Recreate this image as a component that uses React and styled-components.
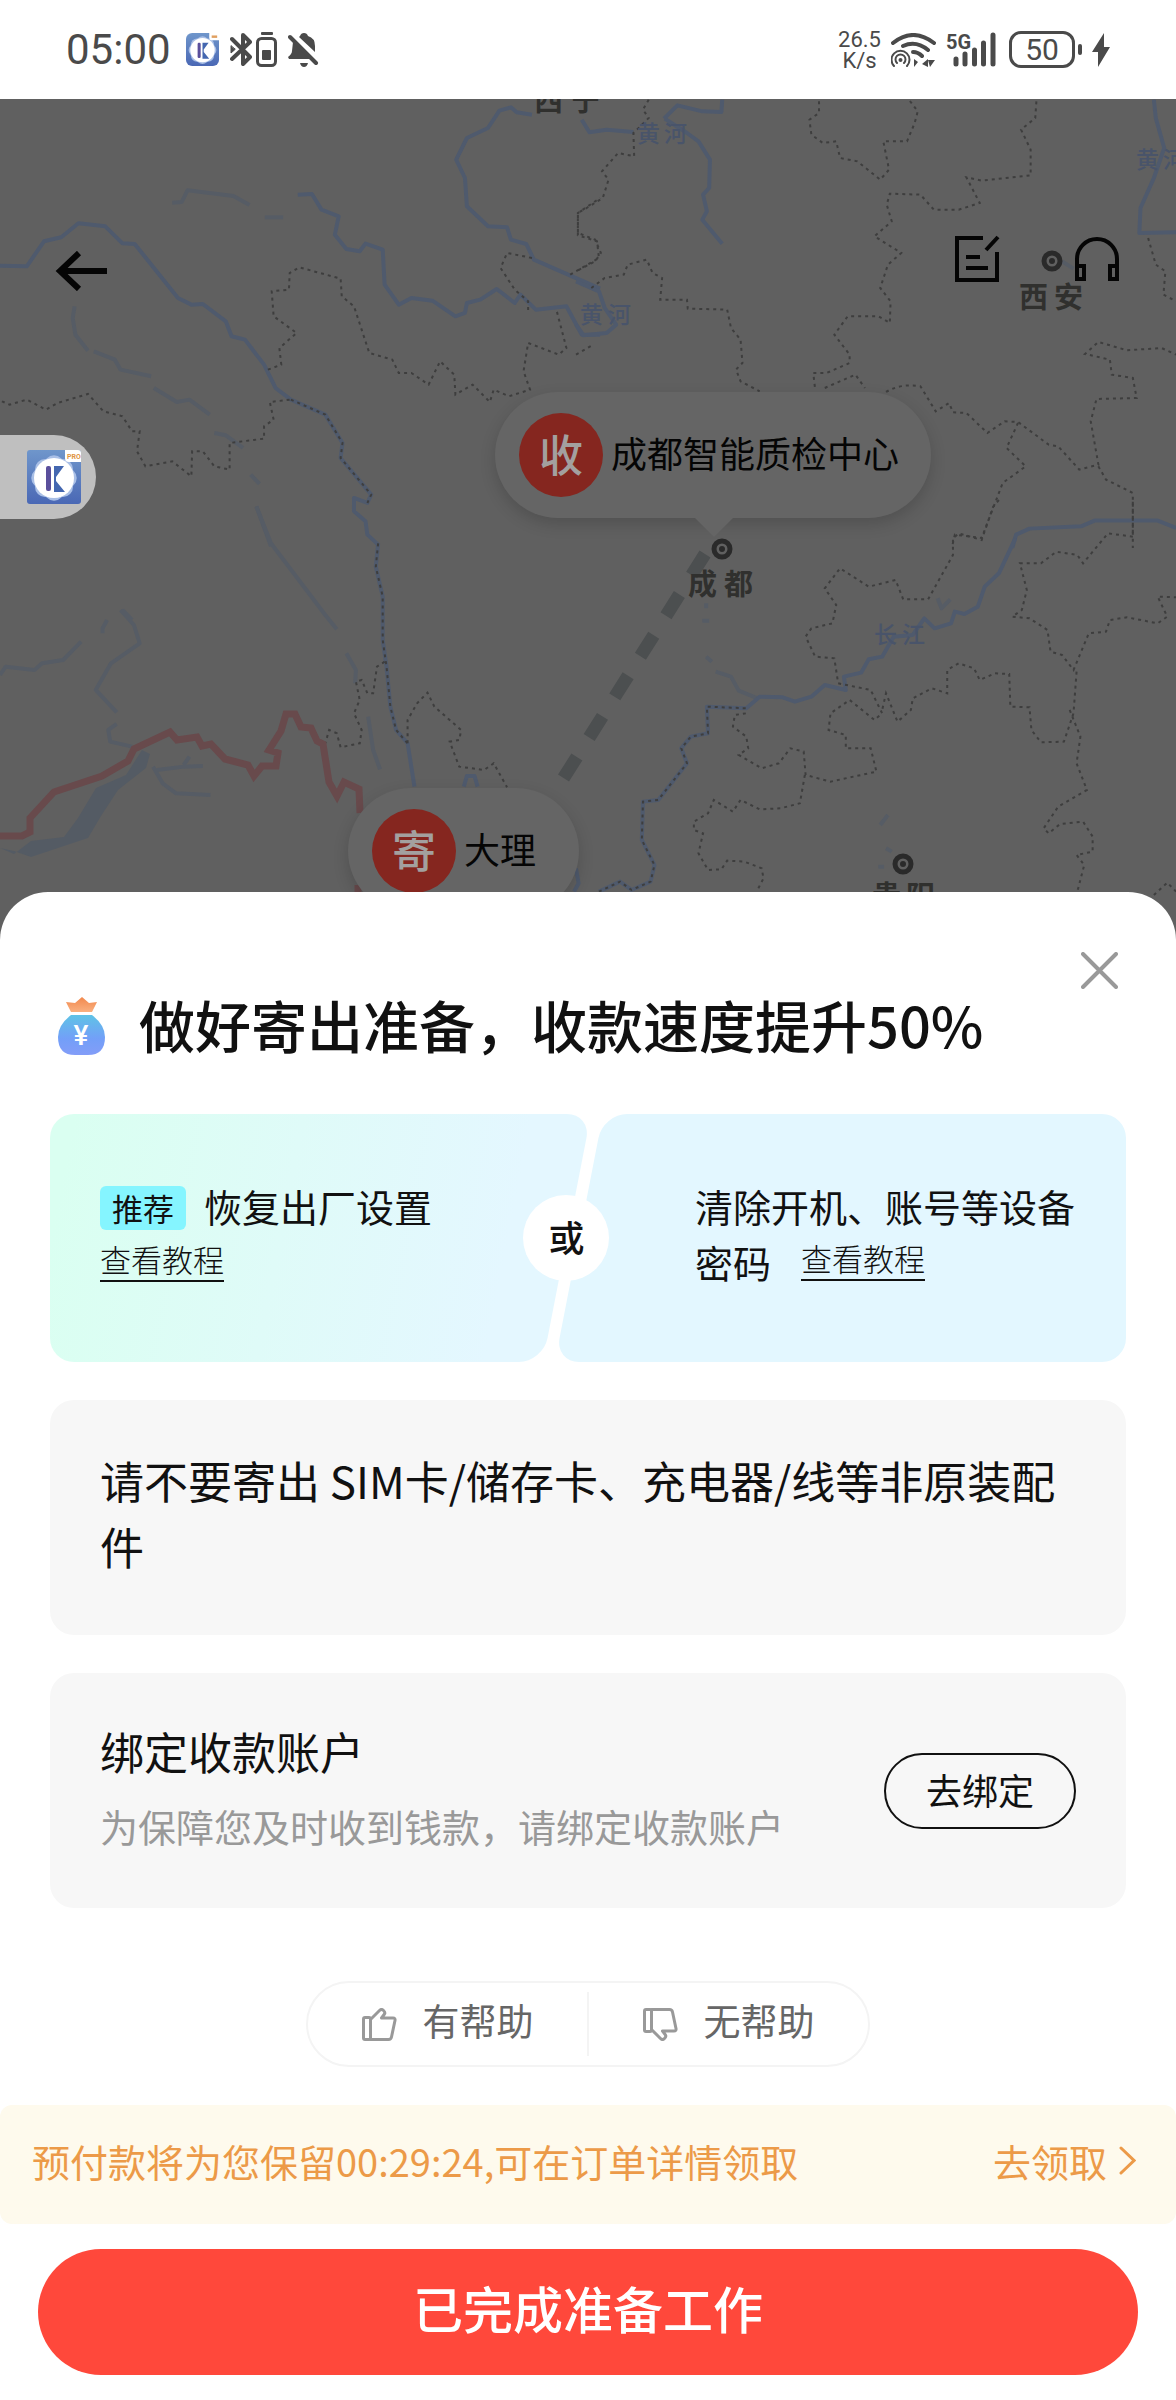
import React from 'react';
import styled, { createGlobalStyle, css } from 'styled-components';

const GlobalStyle = createGlobalStyle`
  * {
    box-sizing: border-box;
  }

  body {
    margin: 0;
    background: #fff;
    color: #111;
    font-family: 'Noto Sans CJK SC', 'Noto Sans', sans-serif;
  }

  button {
    margin: 0;
    padding: 0;
    border: 0;
    background: none;
    color: inherit;
    font: inherit;
    cursor: pointer;
  }

  a {
    color: inherit;
    text-decoration: none;
  }

  svg {
    display: block;
    flex: none;
  }
`;

/* ---------- status bar ---------- */

const StatusBar = styled.header`
  display: flex;
  align-items: center;
  justify-content: space-between;
  height: 99px;
  padding: 0 66px;
  color: #4a4a4a;
  font-family: Roboto, sans-serif;
`;

const StatusGroup = styled.div`
  display: flex;
  align-items: center;
  gap: ${props => props.$gap}px;
`;

const Clock = styled.time`
  margin-right: 4px;
  font-size: 42px;
  line-height: 48px;
`;

const NetSpeed = styled.div`
  font-size: 22px;
  line-height: 21px;
  text-align: center;
`;

const Battery = styled.div`
  width: 66px;
  height: 37px;
  margin-left: 2px;
  border: 3px solid #4a4a4a;
  border-radius: 12px;
  font-size: 30px;
  line-height: 32px;
  text-align: center;
`;

const BatteryTip = styled.div`
  width: 4px;
  height: 11px;
  border-radius: 2px;
  background: #4a4a4a;
`;

const AppLogo = ({ size, pro }) => (
  <svg width={size} height={size} viewBox="0 0 54 54" aria-hidden="true">
    <defs>
      <linearGradient id="logoBg" x1="0" y1="0" x2="0" y2="1">
        <stop offset="0" stopColor="#6f96cb" />
        <stop offset="1" stopColor="#4a68b5" />
      </linearGradient>
    </defs>
    <rect width="54" height="54" rx={pro ? 3 : 10} fill="url(#logoBg)" />
    <g fill="#a9bfe6">
      <rect x="8" y="9" width="38" height="38" rx="10" />
      <rect x="8" y="9" width="38" height="38" rx="10" transform="rotate(45 27 28)" />
    </g>
    <circle cx="27" cy="28" r="20" fill="#fff" />
    <rect x="19" y="16" width="5" height="25" rx="2" fill="#5a4f9c" />
    <path d="M27 16h10L29 27v4l9 11H27z" fill="#4467b0" />
    <path d="M38 0h13a3 3 0 0 1 3 3v9H42q-4 0-4-4z" fill="#fff" />
    {pro && (
      <text x="40" y="9" fontSize="7" fontWeight="700" fill="#e0953f" fontFamily="Roboto, sans-serif">
        PRO
      </text>
    )}
    {!pro && <path d="M42 6h9" stroke="#e0a060" strokeWidth="4" />}
  </svg>
);

const BluetoothIcon = () => (
  <svg width="22" height="35" viewBox="0 0 22 35" fill="none" stroke="#4a4a4a" strokeWidth="4" strokeLinejoin="round" strokeLinecap="round">
    <path d="M2 7l18 18-7 7V3l7 7L2 27" />
    <path d="M1 14v7l4-3.500z" strokeWidth="1" fill="#4a4a4a" />
  </svg>
);

const DeviceBatteryIcon = () => (
  <svg width="21" height="35" viewBox="0 0 21 35">
    <rect x="5" y="0" width="12" height="3" rx="1" fill="#4a4a4a" />
    <rect x="1.500" y="6.500" width="18" height="27" rx="4" fill="none" stroke="#4a4a4a" strokeWidth="3" />
    <rect x="6" y="18" width="9" height="10" rx="1" fill="#4a4a4a" />
  </svg>
);

const MutedBellIcon = () => (
  <svg width="31" height="34" viewBox="0 0 31 34" fill="#4a4a4a">
    <path d="M12 3q1-3 4-3t4 3q7 2 7 10v6L11 4zM5 9l19 17H1l-1-2q4-3 4-6z" />
    <path d="M12 30h8q-1 4-4 4t-4-4z" />
    <path d="M2 4l26 26" stroke="#4a4a4a" strokeWidth="4" strokeLinecap="round" />
  </svg>
);

const WifiIcon = () => (
  <svg width="45" height="34" viewBox="0 0 45 34" fill="none" stroke="#4a4a4a" strokeWidth="4" strokeLinecap="round">
    <path d="M2 10q20-16 41 0M12 13q13-6 25 4M22 19q5 0 9 4" />
    <circle cx="9.500" cy="27" r="10" fill="#fff" stroke="none" />
    <g strokeWidth="2">
      <path d="M3 33a9 9 0 1 1 13 0M6 30a5 5 0 1 1 7 0" />
    </g>
    <circle cx="9.500" cy="27" r="2" fill="#4a4a4a" stroke="none" />
    <path d="M23 26l4 3-4 5zM31 31l6-5v8zM37 27h7l-5 7z" fill="#4a4a4a" stroke="none" />
  </svg>
);

const SignalIcon = () => (
  <svg width="51" height="35" viewBox="0 0 51 35">
    <text x="0" y="17" fontSize="20" fontWeight="700" fill="#4a4a4a">5G</text>
    <path d="M10 27v5M19 22v10M28.500 18v14M37.500 11v21M47 3v29" stroke="#4a4a4a" strokeWidth="5" strokeLinecap="round" />
  </svg>
);

const BoltIcon = () => (
  <svg width="18" height="34" viewBox="0 0 18 34">
    <path d="M12 0L0 19h6v15L18 14h-6z" fill="#4a4a4a" />
  </svg>
);

/* ---------- map ---------- */

const MapArea = styled.section`
  position: relative;
  height: 842px;
  overflow: hidden;
  background: #606060;
`;

const MapCanvas = styled.svg`
  position: absolute;
  inset: 0;
  width: 100%;
  height: 100%;
`;

const MapToolbar = styled.nav`
  position: relative;
  display: flex;
  align-items: flex-start;
  justify-content: space-between;
  padding: 136px 56px 0 54px;
`;

const BackButton = styled.button`
  padding-top: 16px;
`;

const ToolbarActions = styled.div`
  display: flex;
  align-items: center;
  gap: 74px;
`;

const Pin = styled.div`
  position: absolute;
  left: ${props => props.$left}px;
  top: ${props => props.$top}px;
  display: flex;
  align-items: center;
  gap: 8px;
  min-width: 231px;
  height: 126px;
  padding: 0 32px 0 24px;
  border-radius: 63px;
  background: #656565;
  box-shadow: 0 6px 16px rgba(0, 0, 0, 0.16);

  ${props =>
    props.$tail &&
    css`
      &::after {
        content: '';
        position: absolute;
        left: 200px;
        top: 126px;
        border: 19px solid transparent;
        border-top-color: #656565;
        border-bottom: 0;
      }
    `}
`;

const PinBadge = styled.span`
  display: flex;
  align-items: center;
  justify-content: center;
  width: 84px;
  height: 84px;
  padding-bottom: 4px;
  border-radius: 50%;
  background: #85261f;
  color: #a3a09f;
  font-size: 44px;
  font-weight: 500;
`;

const PinLabel = styled.span`
  padding-bottom: 6px;
  color: #050505;
  font-size: 36px;
  line-height: 52px;
  white-space: nowrap;
`;

const AssistTab = styled.button`
  position: absolute;
  left: 0;
  top: 336px;
  display: flex;
  align-items: center;
  justify-content: flex-end;
  width: 96px;
  height: 84px;
  padding-right: 15px;
  border-radius: 0 42px 42px 0;
  background: #bfbfbf;
`;

// The map was traced in four tiles, each with its own origin.
const TILES = [
  {
    x: 0,
    y: 98,
    rivers: [
      'M0 503L70 505 115 430 160 418 205 376 275 385 320 436 352 438 465 600 500 620 530 618 590 670 605 715 640 725 690 800 720 870 760 905 850 950 895 1035 890 1080 970 1190 960 1215 925 1200 925 1240 955 1270 960 1310 988 1340',
      'M778 290L815 288 840 335 885 355 875 410 905 453 940 460 955 437 1000 455 1005 560 1042 620 1075 600 1130 608 1190 655 1215 645 1220 615 1255 605 1298 573 1345 615 1360 590 1400 635 1480 625 1520 710 1568 710',
      'M1390 50L1350 43 1335 28 1305 38 1275 90 1220 120 1192 185 1215 240 1220 325 1275 385 1325 388 1335 425 1375 438 1395 485 1568 572',
    ],
    streams: [
      'M450 314L475 312 490 277 610 294 652 321',
      'M692 358H740',
      'M195 625L190 660 197 710 230 758',
      'M245 760L300 785 315 815 395 835',
      'M402 870L462 912 495 905 548 950',
      'M560 1005L590 1012 635 1050M655 1130L678 1158M670 1225L708 1345',
    ],
    borders: [
      'M700 815L735 800 730 750 775 705 715 655 710 580 755 575 757 525 782 508 890 542 893 595 925 625 965 765 1025 785 1042 825 1075 825 1120 860 1150 790 1187 830 1190 890 1235 860 1280 912 1290 875 1330 895 1385 875 1368 820 1380 735 1460 770 1480 750 1455 640',
      'M5 910L25 920 70 905 120 935 150 915 230 888 270 940 320 955 345 1000 365 1000 358 1060 380 1105 450 1090 500 1135 502 1060 530 1060 560 1105 600 1115 600 1035 690 1022 690 985 715 965 705 912 760 905',
      'M1390 480L1325 465 1308 510 1345 575 1380 610 1380 645M1490 530L1565 480 1560 430 1510 412 1510 345 1568 300',
      'M760 905L850 950 895 1035 890 1080 970 1190 960 1215',
    ],
  },
  {
    x: 576,
    y: 98,
    rivers: [
      'M15 65L35 103 80 95 150 102M230 62L265 22 330 40 380 42 382 5M232 62L290 105 320 130 350 185 348 270 332 290 342 340 330 365 382 437',
      'M1510 5L1515 60 1537 150 1510 240 1475 330 1472 405 1568 403',
      'M0 550L60 580 75 630 105 680 80 705 20 712 0 680',
      'M1140 1350L1150 1310 1185 1292 1320 1285 1355 1268 1520 1268 1568 1290',
    ],
    streams: ['M1270 490L1300 512'],
    borders: [
      'M190 5L175 35 190 60 150 105 152 175 110 165 68 220 85 245 70 300 28 330 5 345 5 405 50 425 65 465 50 490 0 520',
      'M40 570L75 540 125 530 135 500 185 485 200 525 225 540 220 605 290 605 292 632 395 635 405 690 430 725 435 795 418 815 430 850 480 880',
      'M635 10L635 45 610 65 615 110 645 135 680 130 690 180 735 190 795 245 818 215 803 130 865 130 885 75 893 40 870 5',
      'M1203 10L1200 60 1163 95 1188 155 1188 232 1060 248 1020 238 1055 315 1000 335 935 335 900 290 820 287 812 320 825 370 780 415 850 465 815 500 795 570 822 610 820 675 790 655 710 655 675 710 715 770 715 795 655 825 620 825 625 875',
      'M650 870L730 830 755 870M810 882Q850 855 900 865L940 940 975 915 985 943 1020 945 1075 1005 1120 970 1155 972 1235 1040 1260 1045 1315 1115 1365 1100 1345 970 1360 903 1465 900 1455 840 1400 830 1395 785 1330 768 1365 732 1440 757 1530 750 1568 770',
      'M1155 975L1125 1050 1175 1105 1115 1155 1060 1320 990 1310 982 1350M1365 1105L1385 1145 1455 1185 1455 1350M1495 420L1515 500 1540 520 1535 590 1568 610M0 770L45 740',
    ],
  },
  {
    x: 0,
    y: 500,
    rivers: [
      'M988 130L982 200 1000 290 1000 420 1010 500 1020 620 1035 690 1065 730 1083 860',
      'M1212 860L1220 828 1240 828 1248 860M1505 1105L1512 1150 1500 1175',
    ],
    streams: [
      'M670 20L708 130 850 345 880 388M905 460L930 510 928 550M962 650L975 750 993 808',
      'M0 525L15 500 90 510 110 490 165 480 212 425M280 360L268 385V400',
      'M315 330L350 375 365 430 290 490 250 570 305 637M320 330L345 360M305 672L283 690 288 725 345 740',
      'M400 800L425 850 460 880 550 885M410 810L480 800 530 798M480 795L495 770',
    ],
    borders: [
      'M988 130L982 200 1000 290 1000 420 1010 500 1020 620 1035 690 1065 730',
      'M1005 485L985 500 975 580 960 580 945 540 930 545 940 600 925 640 945 690 940 730 890 742 880 700 860 690 850 730',
      'M1065 730L1065 660 1090 610 1117 578 1135 620 1205 690 1200 720 1175 725 1200 800 1265 810 1290 790 1325 862',
    ],
  },
  {
    x: 576,
    y: 500,
    rivers: [
      'M60 1175L115 1145 145 1170 195 1145 205 1095 172 1020 175 905 215 900 290 790 275 745 300 710 345 700 342 620 445 625 480 590 540 592 572 605 615 590 650 555 705 570 700 530 745 518 765 478 800 470 830 410 880 405 910 355 937 385 980 370 990 335 1015 342 1050 320 1068 260 1105 220 1148 115',
    ],
    streams: [
      'M365 515L405 530 425 572 475 595M795 975L815 945M945 295L955 325 978 298M340 470L355 485M340 310V325M330 362H348M790 1100H805M810 1045L825 1055',
    ],
    borders: [
      'M60 1175L115 1145 145 1170 195 1145 205 1095 172 1020 175 905 215 900 290 790 275 745 300 710 345 700 342 620 445 625',
      'M1455 5L1455 110 1390 100 1325 190 1310 165 1255 155 1215 190 1160 190 1178 270 1165 330 1140 350 1185 355 1232 390 1240 455 1270 465 1300 510 1340 400 1385 395 1395 360 1440 352 1520 370 1545 350 1520 290 1568 292',
      'M1105 0L1090 20 1060 120 1000 100 985 115 985 165 920 298 855 298 835 240 765 260 690 205 650 265 680 315 670 370 615 385 600 410 625 470 675 475 685 550 770 570 800 640 780 660 715 600 665 640 660 690 705 705 705 745 770 745 785 815 665 845 600 825 595 755 560 745 530 790 485 805 425 765 450 745 445 710 410 680 415 645 445 640',
      'M1308 515L1300 640 1275 725 1215 727 1190 690 1185 622 1135 620 1132 522 1095 520 1055 540 1040 505 1000 490 970 510 970 580 930 565 880 595 875 630 840 665 810 580 800 630',
      'M1290 630L1318 710 1308 790 1335 870 1260 920 1222 985 1235 1000 1265 972 1325 965 1350 1010 1350 1055 1308 1065 1328 1095 1310 1175M1510 1185L1545 1148 1568 1175',
      'M598 825L585 910 535 925 480 928 430 900 410 935 360 900 345 940 308 965 308 990 332 1000 320 1060 345 1110 380 1108 395 1082 440 1085 485 1105 490 1135 472 1175',
    ],
  },
];

const RIVER_LABELS = [
  { text: '黄河', x: '637 664', y: 142 },
  { text: '黄河', x: '580 608', y: 323 },
  { text: '黄河', x: '1136 1163', y: 168 },
  { text: '长江', x: '874 902', y: 643 },
];

const CITIES = [
  { text: '西宁', x: '534 571', y: 111 },
  { text: '西安', x: '1019 1054', y: 308, cx: 1052, cy: 261 },
  { text: '成都', x: '688 724', y: 595, cx: 722, cy: 549 },
  { text: '贵阳', x: '872 906', y: 907, cx: 903, cy: 864 },
];

const River = styled.path`
  fill: none;
  stroke: ${props => (props.$faint ? '#565c65' : '#4f5a6d')};
  stroke-width: 4px;
  stroke-linejoin: round;
  vector-effect: non-scaling-stroke;
`;

const Border = styled.path`
  fill: none;
  stroke: #3e3e3e;
  stroke-width: 2px;
  stroke-dasharray: 3 4;
  vector-effect: non-scaling-stroke;
`;

const MapDrawing = () => (
  <MapCanvas viewBox="0 99 1176 842" preserveAspectRatio="xMinYMin slice" aria-hidden="true">
    {TILES.map(tile => (
      <g key={`${tile.x}-${tile.y}`} transform={`translate(${tile.x} ${tile.y}) scale(0.3827 0.3333)`}>
        {tile.streams.map(d => (
          <River key={d} d={d} $faint />
        ))}
        {tile.rivers.map(d => (
          <River key={d} d={d} />
        ))}
        {tile.borders.map(d => (
          <Border key={d} d={d} />
        ))}
      </g>
    ))}
    <path d="M0 848l14 6 17-13 33-4 14-19 18-30 30-13 16-25 8 4-4 14-28 22-17 26-13 22-30 10-27 9-17-6z" fill="#545b64" />
    <path
      d="M0 836H22l8-4v-14l24-26 48-16 26-15 6-12 36-17 7 8 20-3 5 9 9-2 14 15 23 6 6 11 8-10h14l2-13-9-3 12-19 5-17h9l6 13 10 1 6 13 6 3 6 38 8 14 7-14 15 7 1 24"
      fill="none"
      stroke="#684a4c"
      strokeWidth="7"
    />
    <path d="M358 885v10" stroke="#684a4c" strokeWidth="7" />
    <path d="M705 554L556 790" stroke="#4c4f50" strokeWidth="13" strokeDasharray="25 23" />
    {RIVER_LABELS.map(label => (
      <text key={label.x} x={label.x} y={label.y} fontSize="23" fontWeight="500" fill="#49546a">
        {label.text}
      </text>
    ))}
    {CITIES.map(city => (
      <g key={city.text}>
        {city.cx && (
          <>
            <circle cx={city.cx} cy={city.cy} r="8" fill="none" stroke="#2a2a2a" strokeWidth="5" />
            <circle cx={city.cx} cy={city.cy} r="3" fill="#2a2a2a" />
          </>
        )}
        <text x={city.x} y={city.y} fontSize="29" fontWeight="700" fill="#30302e">
          {city.text}
        </text>
      </g>
    ))}
  </MapCanvas>
);

const BackIcon = () => (
  <svg width="53" height="40" viewBox="0 0 53 40" fill="none" stroke="#050505" strokeWidth="6">
    <path d="M25 2L6 20l19 18M5 20h48" />
  </svg>
);

const NoteIcon = () => (
  <svg width="47" height="48" viewBox="0 0 47 48" fill="none" stroke="#050505" strokeWidth="4">
    <path d="M30 3H4v42h40V17M33 15L45 2" />
    <path d="M13 22h14M13 33h22" />
  </svg>
);

const HeadsetIcon = () => (
  <svg width="46" height="46" viewBox="0 0 46 46" fill="none" stroke="#050505" strokeWidth="4">
    <path d="M3 30V23a20 20 0 0 1 40 0v7" />
    <path d="M3 30h7v13H3zM36 30h7v13h-7z" />
  </svg>
);

/* ---------- bottom sheet ---------- */

const Sheet = styled.main`
  position: relative;
  z-index: 0;
  margin-top: -49px;
  padding: 60px 50px 0;
  border-radius: 48px 48px 0 0;
  background: #fff;
`;

const CloseButton = styled.button`
  display: block;
  margin: 0 8px 0 auto;
`;

const TitleRow = styled.div`
  display: flex;
  align-items: center;
  gap: 34px;
  padding: 5px 0 56px 8px;
`;

const Title = styled.h1`
  margin: 0;
  padding-bottom: 4px;
  font-size: 56px;
  font-weight: 500;
  line-height: 60px;
`;

const Options = styled.div`
  position: relative;
  display: grid;
  grid-template-columns: minmax(0, 517fr) minmax(0, 547fr);
  gap: 12px;
  height: 248px;
  margin-bottom: 38px;
`;

// Outer corners are straight, the inner side is a skewed plate.
const Option = styled.div`
  position: relative;
  padding: ${props => (props.$side === 'left' ? '64px 0 0 50px' : '64px 40px 0 116px')};
  clip-path: ${props =>
    props.$side === 'left' ? 'inset(0 -30px 0 0 round 24px)' : 'inset(0 0 0 -30px round 24px)'};

  &::before {
    content: '';
    position: absolute;
    z-index: -1;
    inset: ${props => (props.$side === 'left' ? '0 0 0 -60px' : '0 -60px 0 0')};
    border-radius: 24px;
    background: ${props =>
      props.$side === 'left' ? 'linear-gradient(90deg, #dafff1 60px, #e4f7ff 90%)' : '#e3f7ff'};
    transform: skewX(-11deg);
  }
`;

const OptionText = styled.p`
  margin: 0;
  font-size: 38px;
  line-height: 56px;
`;

const Tag = styled.span`
  display: inline-block;
  margin-right: 18px;
  padding: 0 12px;
  border-radius: 6px;
  background: #85f5ff;
  font-size: 31px;
  line-height: 44px;
  vertical-align: 1px;
`;

const GuideLink = styled.a`
  display: inline-block;
  margin: ${props => (props.$inline ? '0 0 0 30px' : '4px 0 0')};
  border-bottom: 2px solid #111;
  font-size: 31px;
  font-weight: 300;
  line-height: 42px;
  vertical-align: ${props => (props.$inline ? '7px' : 'top')};
`;

const OrBadge = styled.span`
  position: absolute;
  left: 48%;
  top: 50%;
  display: flex;
  align-items: center;
  justify-content: center;
  width: 86px;
  height: 86px;
  margin: -43px;
  padding-bottom: 4px;
  border-radius: 50%;
  background: #fff;
  font-size: 36px;
  font-weight: 500;
`;

const Card = styled.section`
  display: flex;
  align-items: center;
  justify-content: space-between;
  min-height: 235px;
  margin-bottom: 38px;
  padding: 0 50px;
  border-radius: 24px;
  background: #f7f7f7;
`;

const CardBody = styled.div`
  padding-bottom: 10px;
`;

const CardText = styled.p`
  margin: 0;
  font-size: 44px;
  line-height: 66px;
`;

const CardHint = styled.p`
  margin: 14px 0 0;
  color: #999;
  font-size: 38px;
  line-height: 56px;
`;

const BindButton = styled.button`
  flex: none;
  width: 192px;
  height: 76px;
  padding-bottom: 4px;
  border: 2px solid #111;
  border-radius: 38px;
  font-size: 36px;
`;

const Feedback = styled.div`
  display: flex;
  align-items: center;
  width: 564px;
  height: 86px;
  margin: 73px auto 38px;
  border: 2px solid #f4f4f4;
  border-radius: 43px;
`;

const FeedbackButton = styled.button`
  display: flex;
  flex: 1;
  align-items: center;
  justify-content: center;
  gap: 26px;
  height: 64px;
  color: #666;
  font-size: 37px;
  line-height: 56px;

  & + & {
    border-left: 2px solid #f4f4f4;
  }
`;

const FeedbackLabel = styled.span`
  padding-bottom: 8px;
`;

const Banner = styled.aside`
  display: flex;
  align-items: center;
  justify-content: space-between;
  height: 119px;
  margin: 0 -50px 25px;
  padding: 0 40px 8px 32px;
  border-radius: 12px;
  background: #fefaed;
  color: #ec9a48;
  font-size: 38px;
`;

const BannerLink = styled.a`
  display: flex;
  align-items: center;
  gap: 12px;
`;

const DoneButton = styled.button`
  display: block;
  width: calc(100% + 24px);
  height: 126px;
  margin: 0 -12px 25px;
  padding-bottom: 10px;
  border-radius: 63px;
  background: #ff483b;
  color: #fff;
  font-size: 50px;
  font-weight: 500;
`;

const CloseIcon = () => (
  <svg width="37" height="37" viewBox="0 0 37 37" stroke="#999" strokeWidth="4" strokeLinecap="round">
    <path d="M2 2l33 33M35 2L2 35" />
  </svg>
);

const MoneyBagIcon = () => (
  <svg width="47" height="58" viewBox="0 0 47 58">
    <defs>
      <linearGradient id="bag" x1="0" y1="0" x2="0" y2="1">
        <stop offset="0" stopColor="#5fc3e6" />
        <stop offset="0.6" stopColor="#739ff8" />
        <stop offset="1" stopColor="#839df8" />
      </linearGradient>
      <linearGradient id="knot" x1="0" y1="0" x2="0" y2="1">
        <stop offset="0" stopColor="#f2884c" />
        <stop offset="1" stopColor="#f9b080" />
      </linearGradient>
    </defs>
    <path d="M13 15L8 5l9 1 7-6 7 6 8-1-5 10z" fill="url(#knot)" />
    <path d="M13 18h21q13 10 13 22 0 18-17 18H17Q0 58 0 40 0 28 13 18z" fill="url(#bag)" />
    <text x="23" y="48" textAnchor="middle" fontSize="28" fontWeight="500" fill="#fff" fontFamily="Roboto, sans-serif">
      ¥
    </text>
  </svg>
);

const ThumbIcon = ({ down }) => (
  <svg width="35" height="33" viewBox="0 0 35 33" fill="none" stroke="#999" strokeWidth="3" strokeLinejoin="round">
    <g transform={down ? 'translate(0 33) scale(1 -1)' : undefined}>
      <rect x="1.500" y="9.500" width="7" height="22" rx="1.500" />
      <path d="M8.500 11.500L17.500 2.500q2-2 4 0t1 3.500L19.500 10H31q2.500 0 2 2.500L29.500 29q-.5 2.500-3 2.500h-18z" />
    </g>
  </svg>
);

const ChevronIcon = () => (
  <svg width="17" height="29" viewBox="0 0 17 29" fill="none" stroke="#ec9a48" strokeWidth="3" strokeLinecap="round">
    <path d="M2 2l13 12.500L2 27" />
  </svg>
);

const App = () => (
  <>
    <GlobalStyle />
    <StatusBar>
      <StatusGroup $gap={11}>
        <Clock>05:00</Clock>
        <AppLogo size={33} />
        <StatusGroup $gap={4}>
          <BluetoothIcon />
          <DeviceBatteryIcon />
        </StatusGroup>
        <MutedBellIcon />
      </StatusGroup>
      <StatusGroup $gap={10}>
        <NetSpeed>
          26.5
          <br />
          K/s
        </NetSpeed>
        <WifiIcon />
        <SignalIcon />
        <StatusGroup $gap={3}>
          <Battery>50</Battery>
          <BatteryTip />
        </StatusGroup>
        <BoltIcon />
      </StatusGroup>
    </StatusBar>

    <MapArea>
      <MapDrawing />
      <MapToolbar>
        <BackButton type="button" aria-label="返回">
          <BackIcon />
        </BackButton>
        <ToolbarActions>
          <button type="button" aria-label="订单备注">
            <NoteIcon />
          </button>
          <button type="button" aria-label="客服">
            <HeadsetIcon />
          </button>
        </ToolbarActions>
      </MapToolbar>
      <Pin $left={495} $top={293} $tail>
        <PinBadge>收</PinBadge>
        <PinLabel>成都智能质检中心</PinLabel>
      </Pin>
      <Pin $left={348} $top={689}>
        <PinBadge>寄</PinBadge>
        <PinLabel>大理</PinLabel>
      </Pin>
      <AssistTab type="button" aria-label="悬浮助手">
        <AppLogo size={54} pro />
      </AssistTab>
    </MapArea>

    <Sheet>
      <CloseButton type="button" aria-label="关闭">
        <CloseIcon />
      </CloseButton>
      <TitleRow>
        <MoneyBagIcon />
        <Title>做好寄出准备，收款速度提升50%</Title>
      </TitleRow>

      <Options>
        <Option $side="left">
          <OptionText>
            <Tag>推荐</Tag>
            恢复出厂设置
          </OptionText>
          <GuideLink href="#reset">查看教程</GuideLink>
        </Option>
        <Option $side="right">
          <OptionText>
            清除开机、账号等设备密码
            <GuideLink href="#password" $inline>
              查看教程
            </GuideLink>
          </OptionText>
        </Option>
        <OrBadge>或</OrBadge>
      </Options>

      <Card>
        <CardBody>
          <CardText>请不要寄出 SIM卡/储存卡、充电器/线等非原装配件</CardText>
        </CardBody>
      </Card>

      <Card>
        <CardBody>
          <CardText>绑定收款账户</CardText>
          <CardHint>为保障您及时收到钱款，请绑定收款账户</CardHint>
        </CardBody>
        <BindButton type="button">去绑定</BindButton>
      </Card>

      <Feedback>
        <FeedbackButton type="button">
          <ThumbIcon />
          <FeedbackLabel>有帮助</FeedbackLabel>
        </FeedbackButton>
        <FeedbackButton type="button">
          <ThumbIcon down />
          <FeedbackLabel>无帮助</FeedbackLabel>
        </FeedbackButton>
      </Feedback>

      <Banner>
        <span>预付款将为您保留00:29:24,可在订单详情领取</span>
        <BannerLink href="#claim">
          去领取
          <ChevronIcon />
        </BannerLink>
      </Banner>

      <DoneButton type="button">已完成准备工作</DoneButton>
    </Sheet>
  </>
);

export default App;
